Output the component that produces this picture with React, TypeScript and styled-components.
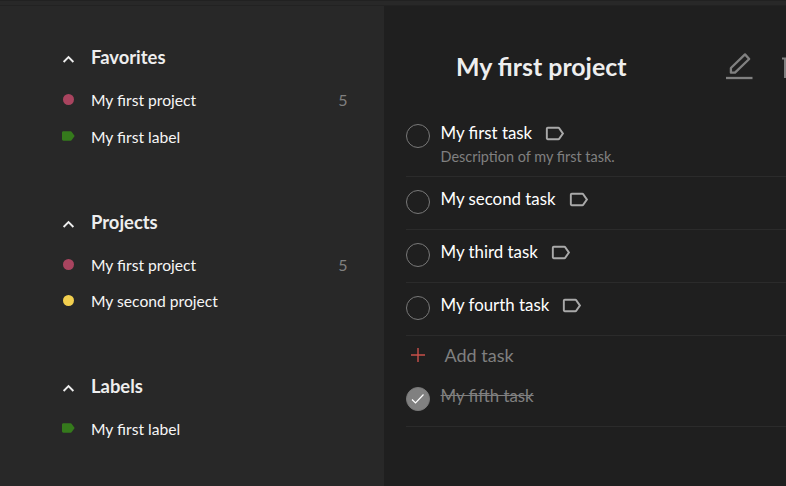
import React from 'react';
import styled, { createGlobalStyle } from 'styled-components';

const Global = createGlobalStyle`
  * { box-sizing: border-box; }
  body { margin: 0; background: #1f1f1f; overflow: hidden; font-family: Lato, sans-serif; color: #fff; }
`;
const Page = styled.div`
  height: 486px;
  display: flex;
  flex-direction: column;
  overflow: hidden;
`;
const TopBar = styled.header`
  flex: 0 0 6px;
  background: #282828;
  border-top: 1px solid #212121;
  border-bottom: 1px solid #222;
`;
const Columns = styled.div`
  flex: 1;
  display: flex;
  min-height: 0;
`;
const Sidebar = styled.nav`
  flex: 0 0 383.5px;
  background: #282828;
  padding: 26px 36px 0 60px;
`;
const Group = styled.section<{ $gap: number }>`
  margin-bottom: ${p => p.$gap}px;
`;
const Row = styled.div<{ $h: number }>`
  height: ${p => p.$h}px;
  display: grid;
  grid-template-columns: 31px 1fr auto;
  align-items: center;
  font-size: 15.65px;
  line-height: 20px;
  color: #f6f6f6;
`;
const ItemName = styled.span`
  padding-top: 2px;
`;
const Heading = styled.h2`
  margin: 0;
  font-size: 18.4px;
  line-height: 24px;
  font-weight: 700;
  color: #eee;
`;
const Count = styled.span`
  padding-top: 2px;
  color: #808080;
  font-size: 16px;
`;
const Dot = styled.span`
  display: block;
  width: 11px;
  height: 11px;
  margin-left: 3px;
  border-radius: 50%;
  background: ${p => p.color};
`;
const Icon = styled.svg<{ $mt?: number; $ml?: number }>`
  display: block;
  flex: none;
  margin-top: ${p => p.$mt ?? 0}px;
  margin-left: ${p => p.$ml ?? 0}px;
`;
const Main = styled.main`
  flex: 1;
  min-width: 0;
  background: #1f1f1f;
  padding-left: 22.5px;
  overflow: hidden;
`;
const Header = styled.div`
  height: 105px;
  display: flex;
  padding: 40px 0 0 50px;
`;
const Title = styled.h1`
  flex: 0 0 269.5px;
  margin: 0;
  font-size: 24.9px;
  line-height: 40px;
  font-weight: 700;
  color: #eee;
`;
const Task = styled.div<{ $h: number }>`
  height: ${p => p.$h}px;
  display: flex;
  border-bottom: 1px solid #2b2b2b;
  padding-top: 11px;
`;
const Check = styled.span<{ $done?: boolean }>`
  flex: none;
  display: flex;
  align-items: center;
  justify-content: center;
  width: 24px;
  height: 24px;
  margin: 2px 10.5px 0 0;
  border: 1px solid #787878;
  border-radius: 50%;
  background: ${p => (p.$done ? '#808080' : 'transparent')};
`;
const Name = styled.div<{ $done?: boolean }>`
  display: flex;
  font-size: 16.85px;
  line-height: 22px;
  color: ${p => (p.$done ? '#808080' : '#fff')};
  text-decoration: ${p => (p.$done ? 'line-through' : 'none')};
`;
const Description = styled.div`
  font-size: 14.45px;
  line-height: 20px;
  margin-top: 2px;
  color: #808080;
`;
const AddTask = styled.div`
  height: 38px;
  display: flex;
  align-items: center;
  gap: 19.5px;
  padding-left: 5px;
  font-size: 18px;
  color: #808080;
`;

const Chevron = () => (
  <Icon width="17" height="10" $mt={4} viewBox="0 0 17 10" fill="none" stroke="#eee" strokeWidth="1.9">
    <path d="M3.6 8 8.5 3.1 13.4 8" />
  </Icon>
);
const LabelMark = () => (
  <Icon width="16" height="16" viewBox="0 0 24 24" fill="#357a1c">
    <path d="M17.63 5.84C17.27 5.33 16.67 5 16 5L5 5.01C3.9 5.01 3 5.9 3 7v10c0 1.1.9 1.99 2 1.99L16 19c.67 0 1.27-.33 1.63-.84L22 12l-4.37-6.16z" />
  </Icon>
);
const LabelOutline = () => (
  <Icon width="23" height="23" viewBox="0 0 24 24" $ml={11} fill="#a9a9a9">
    <path d="M17.63 5.84C17.27 5.33 16.67 5 16 5L5 5.01C3.9 5.01 3 5.9 3 7v10c0 1.1.9 1.99 2 1.99L16 19c.67 0 1.27-.33 1.63-.84L22 12l-4.37-6.16zM16 17H5V7h11l3.55 5L16 17z" />
  </Icon>
);

const Item = ({ name, color, count, h = 36 }: { name: string; color?: string; count?: number; h?: number }) => (
  <Row $h={h}>
    {color ? <Dot color={color} /> : <LabelMark />}
    <ItemName>{name}</ItemName>
    {count && <Count>{count}</Count>}
  </Row>
);
const GroupHead = ({ name }: { name: string }) => (
  <Row $h={49}>
    <Chevron />
    <Heading>{name}</Heading>
  </Row>
);
const TaskRow = ({ name, note, h }: { name: string; note?: string; h: number }) => (
  <Task $h={h}>
    <Check />
    <div>
      <Name>{name}<LabelOutline /></Name>
      {note && <Description>{note}</Description>}
    </div>
  </Task>
);

export default function App() {
  return (
    <Page>
      <Global />
      <TopBar />
      <Columns>
        <Sidebar>
          <Group $gap={42}>
            <GroupHead name="Favorites" />
            <Item name="My first project" color="#a9445f" count={5} />
            <Item name="My first label" h={38} />
          </Group>
          <Group $gap={43}>
            <GroupHead name="Projects" />
            <Item name="My first project" color="#a9445f" count={5} />
            <Item name="My second project" color="#f2cf4f" />
          </Group>
          <Group $gap={0}>
            <GroupHead name="Labels" />
            <Item name="My first label" />
          </Group>
        </Sidebar>
        <Main>
          <Header>
            <Title>My first project</Title>
            <Icon width="27" height="28" $mt={6} viewBox="0 0 27 28" fill="none" stroke="#808080" strokeWidth="2.3" strokeLinejoin="round">
              <path d="M4.9 20.7V16L19 2.4 23.2 7 9 20.7Z" />
              <path d="M0 26H26.5" />
            </Icon>
            <Icon width="24" height="28" $mt={6} $ml={29.5} viewBox="0 0 24 28" fill="none" stroke="#808080" strokeWidth="2">
              <path d="M0 6.5H24M3 6.5V25H21V6.5" />
            </Icon>
          </Header>
          <TaskRow name="My first task" note="Description of my first task." h={66} />
          <TaskRow name="My second task" h={53} />
          <TaskRow name="My third task" h={53} />
          <TaskRow name="My fourth task" h={53} />
          <AddTask>
            <Icon width="14" height="14" viewBox="0 0 14 14" stroke="#c8504a" strokeWidth="1.4">
              <path d="M0 7H14M7 0V14" />
            </Icon>
            <span>Add task</span>
          </AddTask>
          <Task $h={53}>
            <Check $done>
              <Icon width="14" height="12" viewBox="0 0 14 12" fill="none" stroke="#fff" strokeWidth="1.2">
                <path d="M1 6.5 4.5 10 12.5 1.5" />
              </Icon>
            </Check>
            <Name $done>My fifth task</Name>
          </Task>
        </Main>
      </Columns>
    </Page>
  );
}
